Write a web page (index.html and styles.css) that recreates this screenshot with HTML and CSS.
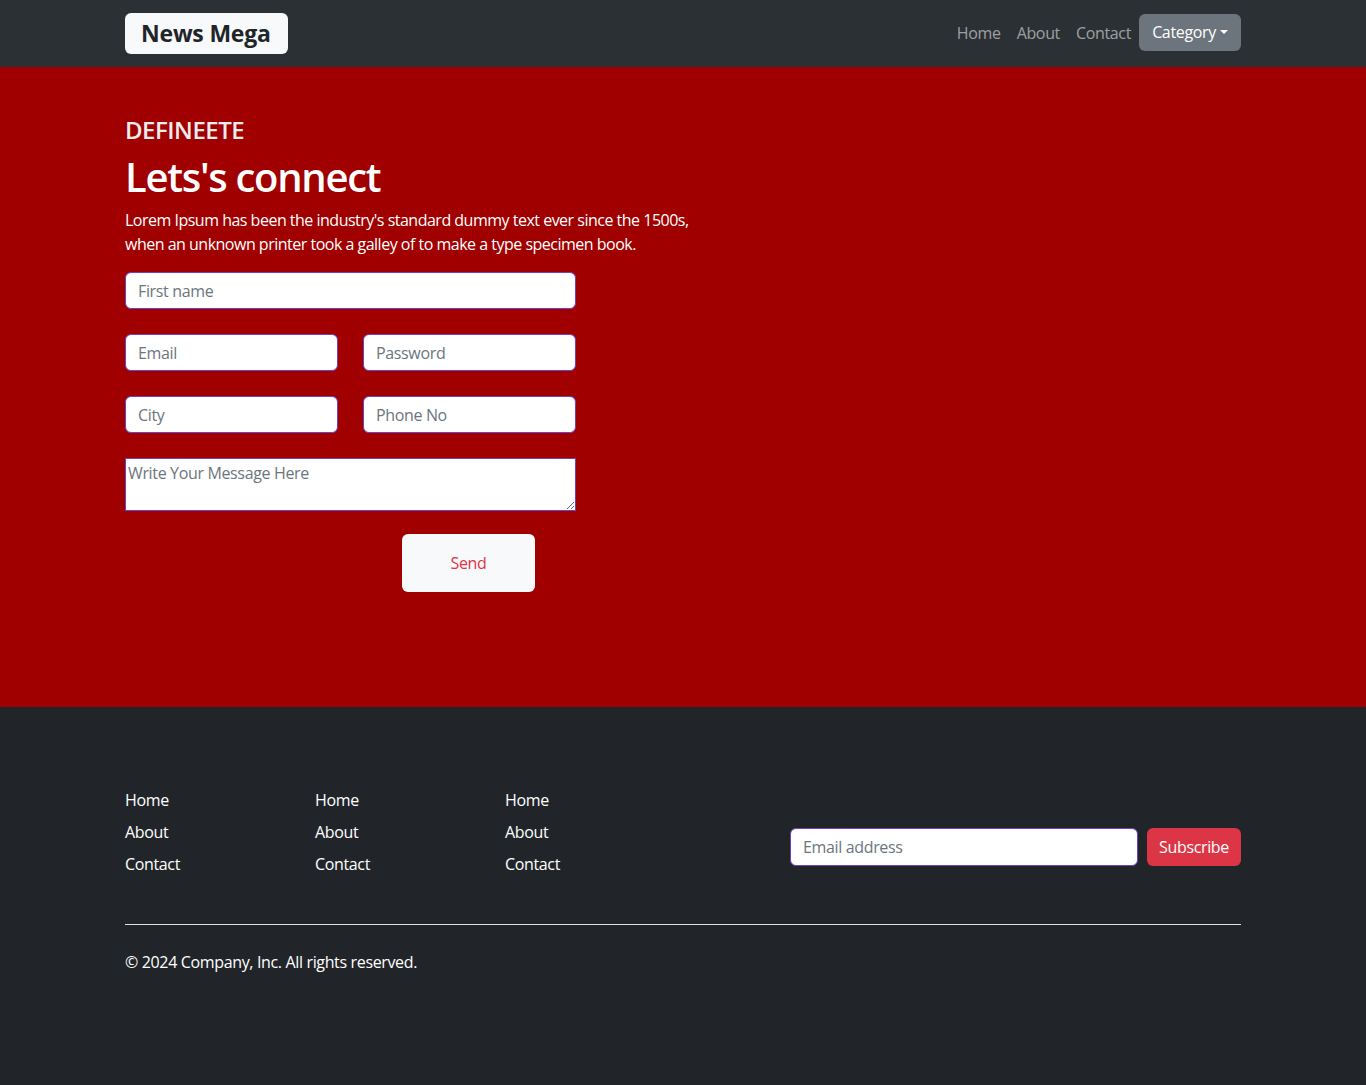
FILE: index.html
```html
<!DOCTYPE html>
<html lang="en">
<head>
<meta charset="utf-8">
<title>News Mega</title>
<link rel="stylesheet" href="styles.css">
</head>
<body>
<header class="navbar">
  <div class="container nav-inner">
    <a class="brand" href="#">News Mega</a>
    <nav class="nav-links">
      <a href="#">Home</a>
      <a href="#">About</a>
      <a href="#">Contact</a>
      <button class="dropdown">Category<span class="caret"></span></button>
    </nav>
  </div>
</header>

<section class="hero">
  <div class="container">
    <h3 class="kicker">DEFINEETE</h3>
    <h1 class="title">Lets's connect</h1>
    <p class="lead">Lorem Ipsum has been the industry's standard dummy text ever since the 1500s,<br>when an unknown printer took a galley of to make a type specimen book.</p>
    <form class="contact-form">
      <input class="field" type="text" placeholder="First name">
      <div class="pair">
        <input class="field" type="text" placeholder="Email">
        <input class="field" type="text" placeholder="Password">
      </div>
      <div class="pair">
        <input class="field" type="text" placeholder="City">
        <input class="field" type="text" placeholder="Phone No">
      </div>
      <textarea class="message" rows="2" placeholder="Write Your Message Here"></textarea>
      <div class="send-row"><button type="button" class="send">Send</button></div>
    </form>
  </div>
</section>

<footer class="footer">
  <div class="container">
    <div class="footer-top">
      <ul class="links">
        <li><a href="#">Home</a></li>
        <li><a href="#">About</a></li>
        <li><a href="#">Contact</a></li>
      </ul>
      <ul class="links">
        <li><a href="#">Home</a></li>
        <li><a href="#">About</a></li>
        <li><a href="#">Contact</a></li>
      </ul>
      <ul class="links">
        <li><a href="#">Home</a></li>
        <li><a href="#">About</a></li>
        <li><a href="#">Contact</a></li>
      </ul>
      <form class="subscribe">
        <input class="sub-input" type="text" placeholder="Email address">
        <button type="button" class="sub-btn">Subscribe</button>
      </form>
    </div>
    <div class="footer-bottom">
      <p>© 2024 Company, Inc. All rights reserved.</p>
    </div>
  </div>
</footer>
</body>
</html>
```

FILE: styles.css
```css
* { box-sizing: border-box; }
html, body { margin: 0; padding: 0; }
body {
  font-family: "Open Sans", "Noto Sans", sans-serif;
  font-size: 16px;
  line-height: 1.5;
  color: #212529;
  background: #212529;
  letter-spacing: -0.35px;
}
a { text-decoration: none; }
.container { width: 1116px; margin: 0 auto; }

/* navbar */
.navbar { background: #2b3035; height: 67px; }
.nav-inner { display: flex; align-items: center; justify-content: space-between; height: 67px; }
.brand {
  display: inline-block;
  background: #f8f9fa;
  color: #212529;
  font-weight: 700;
  font-size: 23px;
  line-height: 41px;
  height: 41px;
  padding: 0 17px 0 16px;
  border-radius: 6px;
  margin-top: -1px;
  letter-spacing: -0.2px;
}
.nav-links { display: flex; align-items: center; margin-top: -2px; }
.nav-links a { color: rgba(255,255,255,0.55); padding: 8px 8px; font-size: 16px; }
.dropdown {
  font: inherit;
  letter-spacing: inherit;
  background: #6c757d;
  color: #fff;
  border: 0;
  border-radius: 6px;
  height: 37px;
  width: 102px;
  padding: 0 12px;
  display: flex;
  align-items: center;
  justify-content: center;
  margin-top: -1px;
}
.caret {
  display: inline-block;
  width: 0; height: 0;
  margin-left: 4px;
  border-left: 4px solid transparent;
  border-right: 4px solid transparent;
  border-top: 4px solid #fff;
}

/* hero */
.hero { background: #a00000; height: 640px; padding-top: 48px; color: #fff; }
.kicker { margin: 0; font-size: 24px; line-height: 29px; font-weight: 600; color: #ececec; letter-spacing: -0.5px; }
.title { margin: 9px 0 0; font-size: 40px; line-height: 48px; font-weight: 600; letter-spacing: -1.3px; }
.lead { margin: 7px 0 0; font-size: 16px; line-height: 24px; letter-spacing: -0.5px; }
.contact-form { width: 451px; margin-top: 16px; display: flex; flex-direction: column; gap: 25px; }
.pair { display: flex; gap: 25px; }
.pair .field { flex: 1; min-width: 0; }
.field, .sub-input {
  font: inherit;
  letter-spacing: inherit;
  height: 37px;
  border: 1px solid #6f42c1;
  border-radius: 6px;
  background: #fff;
  padding: 0 12px;
  color: #212529;
}
.field::placeholder, .sub-input::placeholder, .message::placeholder { color: #6c757d; }
.message {
  font: inherit;
  letter-spacing: inherit;
  height: 53px;
  border: 1px solid #6f42c1;
  border-radius: 0;
  padding: 2px 2px;
  background: #fff;
  resize: vertical;
  display: block;
}
.send-row { display: flex; padding-left: 277px; margin-top: -2px; }
.send {
  font: inherit;
  letter-spacing: inherit;
  width: 133px;
  height: 58px;
  background: #f8f9fa;
  color: #dc3545;
  border: 0;
  border-radius: 6px;
}

/* footer */
.footer { background: #212529; color: #fff; height: 378px; padding-top: 81px; }
.footer-top { display: flex; align-items: flex-start; }
.links { list-style: none; margin: 0; padding: 0; width: 190px; }
.links li { margin-bottom: 8px; line-height: 24px; }
.links a { color: #fff; }
.subscribe { display: flex; gap: 9px; margin-left: 95px; margin-top: 40px; width: 451px; }
.sub-input { flex: 1; height: 38px; border-color: #6f42c1; }
.sub-btn {
  font: inherit;
  letter-spacing: inherit;
  background: #dc3545;
  color: #fff;
  border: 0;
  border-radius: 6px;
  width: 94px;
  height: 38px;
}
.footer-bottom { border-top: 1px solid #dee2e6; margin-top: 40px; padding-top: 25px; }
.footer-bottom p { margin: 0; line-height: 24px; }
```
